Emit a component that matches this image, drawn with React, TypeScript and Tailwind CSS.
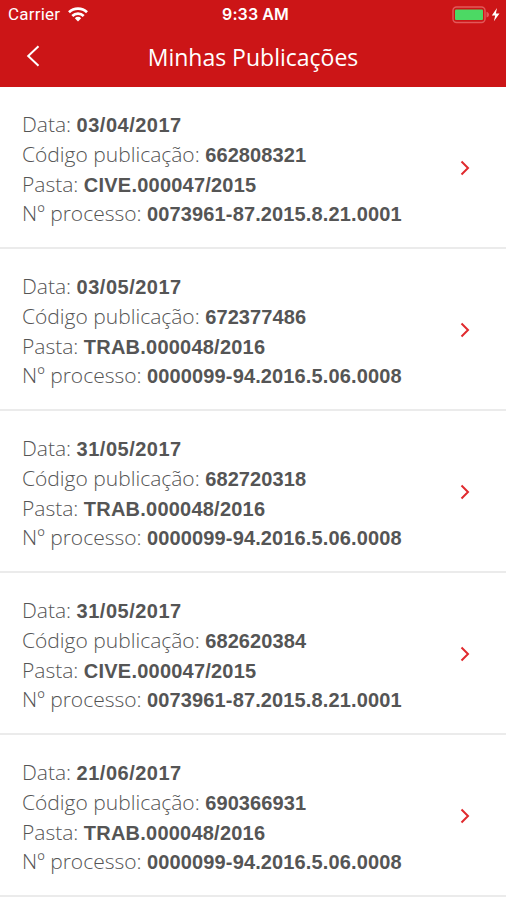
type Publication = {
  date: string;
  code: string;
  folder: string;
  process: string;
};

const publications: Publication[] = [
  { date: "03/04/2017", code: "662808321", folder: "CIVE.000047/2015", process: "0073961-87.2015.8.21.0001" },
  { date: "03/05/2017", code: "672377486", folder: "TRAB.000048/2016", process: "0000099-94.2016.5.06.0008" },
  { date: "31/05/2017", code: "682720318", folder: "TRAB.000048/2016", process: "0000099-94.2016.5.06.0008" },
  { date: "31/05/2017", code: "682620384", folder: "CIVE.000047/2015", process: "0073961-87.2015.8.21.0001" },
  { date: "21/06/2017", code: "690366931", folder: "TRAB.000048/2016", process: "0000099-94.2016.5.06.0008" },
];

function WifiIcon() {
  return (
    <svg width="20" height="15" viewBox="0 0 20 15" fill="none" stroke="white" strokeWidth="2.7">
      <path d="M1 5.3a12.8 12.8 0 0 1 18 0" />
      <path d="M4.3 9a8.1 8.1 0 0 1 11.4 0" />
      <path d="M10 14.4 6.8 11.2a4.5 4.5 0 0 1 6.4 0Z" fill="white" stroke="none" />
    </svg>
  );
}

function BatteryIcon() {
  return (
    <svg width="49" height="18" viewBox="0 0 49 18" fill="none">
      <rect x="1" y="1" width="32" height="15.5" rx="3.5" stroke="#e2595a" strokeWidth="1.4" />
      <rect x="3" y="3.5" width="28" height="10.5" rx="1" fill="#4cd964" />
      <path d="M34.5 5.8c3.4.8 3.4 5 0 5.8Z" fill="#e2595a" />
      <path d="M45 2 39.8 9.5h3.4l-1.3 5.7 5.6-7.8h-3.6Z" fill="white" />
    </svg>
  );
}

function Field({ label, value, tracking }: { label: string; value: string; tracking: string }) {
  return (
    <div className="flex h-[29.75px] items-center gap-[5.5px] whitespace-nowrap leading-[29.75px]">
      <span className="font-['Open_Sans',sans-serif] text-[21px] font-light text-[#555]">{label}</span>
      <span className={`pt-[2px] font-['Liberation_Sans',sans-serif] text-[20px] font-bold text-[#555] ${tracking}`}>{value}</span>
    </div>
  );
}

export default function App() {
  return (
    <div className="h-[900px] w-full overflow-hidden bg-white">
      <header className="h-[86.5px] bg-[#cc1517] text-white">
        {/* Status bar */}
        <div className="grid h-[29px] grid-cols-3 items-center pl-[8px] pr-[5px] font-['Roboto',sans-serif] text-[17px]">
          <div className="flex items-center gap-2 tracking-[0.2px]">
            <span>Carrier</span>
            <WifiIcon />
          </div>
          <span className="pb-[2px] pl-[2px] text-center font-['Inter',sans-serif] text-[16px] font-semibold tracking-[0.1px]">
            9:33 AM
          </span>
          <div className="flex justify-end">
            <BatteryIcon />
          </div>
        </div>

        {/* Title */}
        <div className="grid h-[54px] grid-cols-[48px_1fr_48px] items-center">
          <button className="pl-[26px]" aria-label="Voltar">
            <svg width="14" height="22" viewBox="0 0 14 22" fill="none" stroke="currentColor" strokeWidth="2">
              <path d="M12.5 1.2 2.2 11l10.3 9.8" />
            </svg>
          </button>
          <h1 className="pt-[2px] text-center font-['Open_Sans',sans-serif] text-[23px]">Minhas Publicações</h1>
        </div>
      </header>

      <main>
        {publications.map((item) => (
          <div
            key={item.code}
            className="flex h-[162px] items-center justify-between border-b-2 border-[#ebebeb] pl-[22px] pr-[36px] pt-[6px]"
          >
            <div>
              <Field label="Data:" value={item.date} tracking="tracking-[0.5px]" />
              <Field label="Código publicação:" value={item.code} tracking="tracking-[0.1px]" />
              <Field label="Pasta:" value={item.folder} tracking="tracking-[0.22px]" />
              <Field label="Nº processo:" value={item.process} tracking="tracking-[0.13px]" />
            </div>
            <svg className="mb-[3px]" width="10" height="16" viewBox="0 0 10 16" fill="none" stroke="#e02a2e" strokeWidth="2">
              <path d="m1.5 1.5 6.5 6.5-6.5 6.5" />
            </svg>
          </div>
        ))}
      </main>
    </div>
  );
}
